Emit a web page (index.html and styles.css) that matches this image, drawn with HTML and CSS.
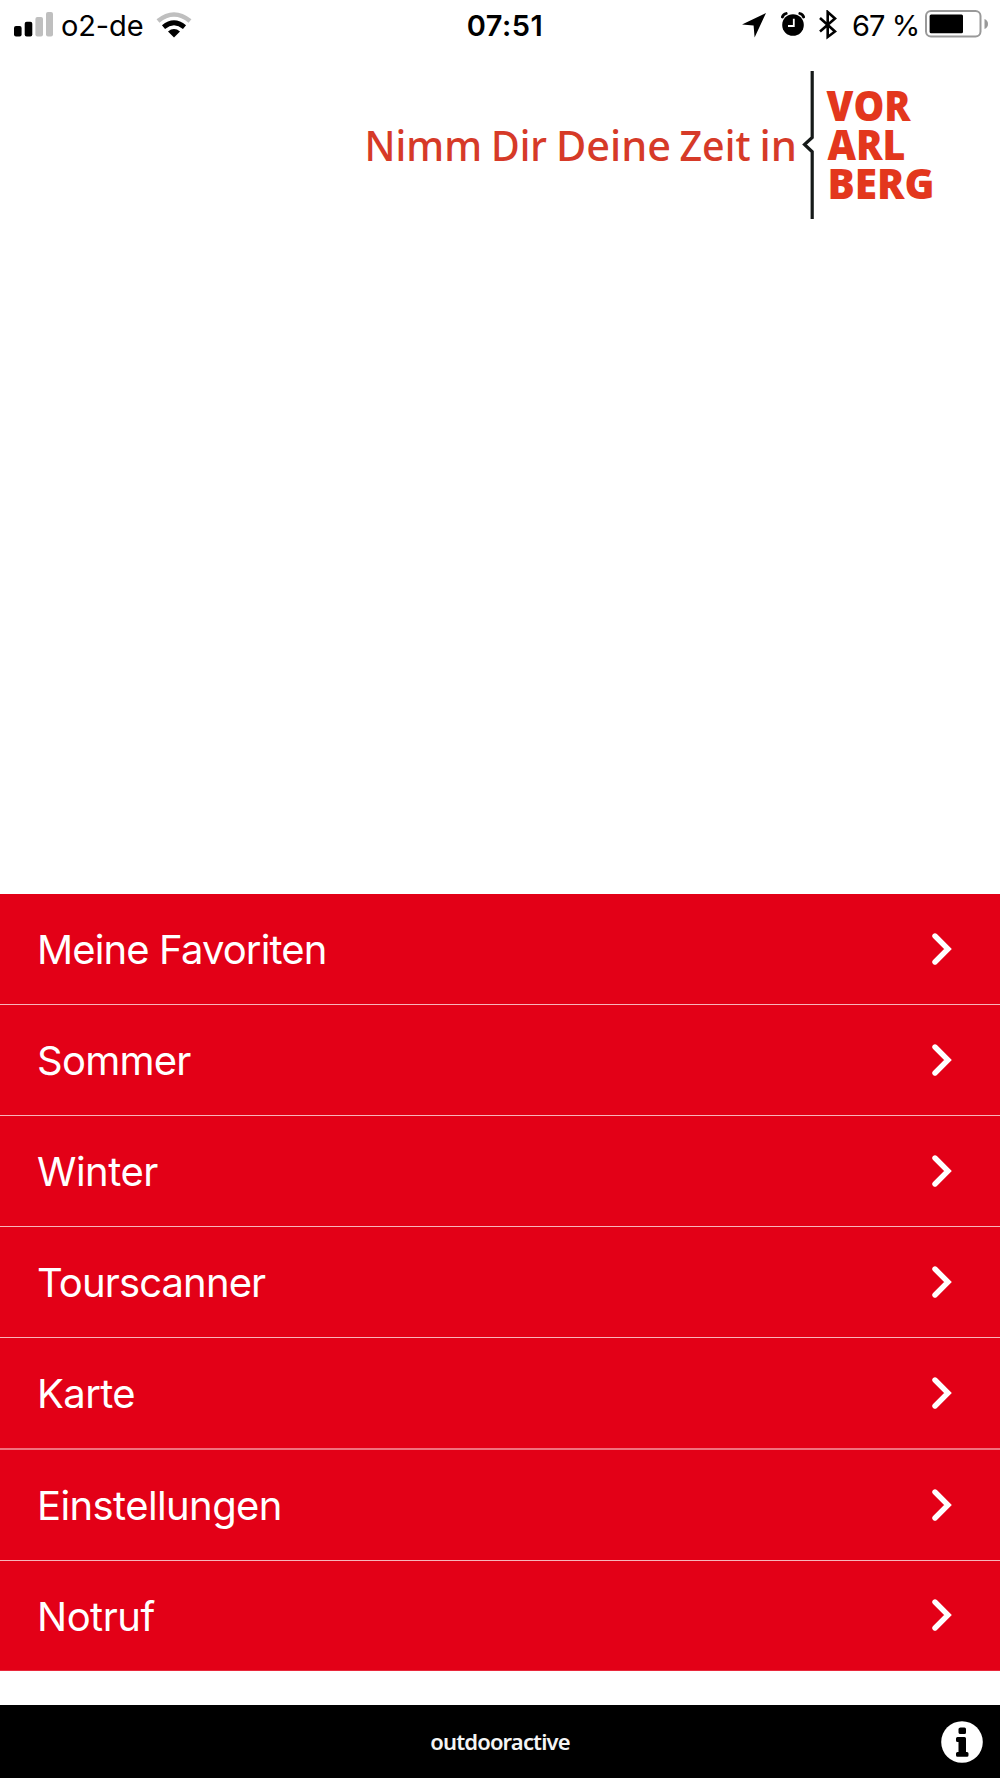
FILE: index.html
```html
<!DOCTYPE html>
<html lang="de">
<head>
<meta charset="utf-8">
<title>Vorarlberg</title>
<link rel="stylesheet" href="styles.css">
</head>
<body>
<div class="screen">
  <header class="status">
    <div class="status-left">
      <svg class="signal" width="39" height="25" viewBox="0 0 39 25">
        <rect x="0" y="14" width="7.6" height="10.6" rx="2"/>
        <rect x="10.7" y="9.8" width="7.6" height="14.8" rx="2"/>
        <g class="dim"><rect x="21.4" y="5" width="7.6" height="19.6" rx="2"/><rect x="32" y="0" width="7" height="24.6" rx="2"/></g>
      </svg>
      <span class="carrier">o2-de</span>
      <svg class="wifi" width="36" height="26" viewBox="0 0 36 26">
        <path class="wifi-far" d="M2 9Q18-4 34 9"/>
        <path class="wifi-near" d="M7.5 15.2Q18 6.5 28.5 15.2"/>
        <path d="M12 19.4Q18 14.8 24 19.4L18 25.4Z"/>
      </svg>
    </div>
    <time class="clock">07:51</time>
    <div class="status-right">
      <svg class="location" width="24" height="25" viewBox="0 0 24 25"><path d="M24 0L12.6 24.5L11.6 12.6L0 11.6Z"/></svg>
      <svg class="alarm" width="24" height="24" viewBox="0 0 24 24">
        <circle cx="12" cy="13" r="10.8"/>
        <path class="bells" d="M1.4 5Q2.2 2.2 5.2 1.5M22.6 5Q21.8 2.2 18.8 1.5"/>
        <path class="hands" d="M12.8 6.8V14H7"/>
      </svg>
      <svg class="bluetooth" width="18" height="30" viewBox="0 0 18 30"><path d="M1 8L16 21.5L8.7 27V2L16 8.5L1 21.5"/></svg>
      <span class="percent">67 %</span>
      <svg class="battery" width="64" height="28" viewBox="0 0 64 28">
        <rect class="shell" x="1" y="1" width="54.5" height="25.5" rx="5"/>
        <rect x="4.6" y="4.4" width="33.4" height="18.8" rx="1.5"/>
        <path class="cap" d="M59.5 9Q63 10.4 63 14T59.5 19Z"/>
      </svg>
    </div>
  </header>

  <div class="brand">
    <svg class="logo" width="580" height="150" viewBox="360 70 580 150">
      <g class="claim">
        <text x="364.5" y="160.5" textLength="117.5" lengthAdjust="spacingAndGlyphs">Nimm</text>
        <text x="491" y="160.5" textLength="56" lengthAdjust="spacingAndGlyphs">Dir</text>
        <text x="556" y="160.5" textLength="115" lengthAdjust="spacingAndGlyphs">Deine</text>
        <text x="679.5" y="160.5" textLength="71" lengthAdjust="spacingAndGlyphs">Zeit</text>
        <text x="759.5" y="160.5" textLength="37.5" lengthAdjust="spacingAndGlyphs">in</text>
      </g>
      <path class="divider" d="M812.2 71V137.5L804.5 144.5L812.2 151.8V219"/>
      <g class="name">
        <text x="826.5" y="120.5" textLength="84" lengthAdjust="spacingAndGlyphs">VOR</text>
        <text x="827.5" y="160" textLength="78" lengthAdjust="spacingAndGlyphs">ARL</text>
        <text x="827.5" y="199.3" textLength="107" lengthAdjust="spacingAndGlyphs">BERG</text>
      </g>
    </svg>
  </div>

  <nav class="menu">
    <a class="item favorites"><span>Meine Favoriten</span><svg class="chevron" width="20" height="32" viewBox="0 0 20 32"><path d="M3 3L16 16L3 29"/></svg></a>
    <a class="item summer"><span>Sommer</span><svg class="chevron" width="20" height="32" viewBox="0 0 20 32"><path d="M3 3L16 16L3 29"/></svg></a>
    <a class="item winter"><span>Winter</span><svg class="chevron" width="20" height="32" viewBox="0 0 20 32"><path d="M3 3L16 16L3 29"/></svg></a>
    <a class="item tours"><span>Tourscanner</span><svg class="chevron" width="20" height="32" viewBox="0 0 20 32"><path d="M3 3L16 16L3 29"/></svg></a>
    <a class="item map"><span>Karte</span><svg class="chevron" width="20" height="32" viewBox="0 0 20 32"><path d="M3 3L16 16L3 29"/></svg></a>
    <a class="item settings"><span>Einstellungen</span><svg class="chevron" width="20" height="32" viewBox="0 0 20 32"><path d="M3 3L16 16L3 29"/></svg></a>
    <a class="item emergency"><span>Notruf</span><svg class="chevron" width="20" height="32" viewBox="0 0 20 32"><path d="M3 3L16 16L3 29"/></svg></a>
  </nav>

  <footer class="footer">
    <span class="provider">outdooractive</span>
    <svg class="info" width="42" height="42" viewBox="0 0 42 42">
      <circle cx="21" cy="21" r="20.8"/>
      <path class="glyph" d="M19.5 6.5H23.5Q25 6.5 25 8V11.5Q25 13 23.5 13H19.5Q17.5 13 17.5 11.5V8Q17.5 6.5 19.5 6.5ZM16.5 16H23.5Q25 16 25 17.5V31H26Q27.5 31 27.5 32.5V34.3Q27.5 35.8 26 35.8H16.5Q15 35.8 15 34.3V32.5Q15 31 16.5 31H17.5V21H16.5Q15 21 15 19.5V17.5Q15 16 16.5 16Z"/>
    </svg>
  </footer>
</div>
</body>
</html>
```
FILE: styles.css
```css
* { box-sizing: border-box; }
body { margin: 0; background: #fff; font-family: Inter, "Liberation Sans", sans-serif; }
svg { display: block; flex: none; }
.screen { display: flex; flex-direction: column; width: 1000px; height: 1778px; background: #fff; }

.status { display: grid; grid-template-columns: 1fr auto 1fr; height: 50px; color: #000; font-size: 29px; line-height: 52px; }
.status-left { display: flex; align-items: flex-start; padding-left: 14px; }
.signal { margin-top: 12px; }
.dim { fill: #bfbfbf; }
.carrier { margin-left: 8px; letter-spacing: -0.1px; width: 83px; white-space: nowrap; }
.wifi { margin: 12px 0 0 12px; }
.wifi-far { fill: none; stroke: #bfbfbf; stroke-width: 4.6; }
.wifi-near { fill: none; stroke: #000; stroke-width: 4.8; }
.clock { font-weight: 600; letter-spacing: 0.5px; padding-left: 10px; }
.status-right { display: flex; align-items: flex-start; justify-content: flex-end; padding-right: 11px; }
.location { margin-top: 13px; }
.alarm { margin: 12px 0 0 15px; }
.bells { fill: none; stroke: #000; stroke-width: 2.8; stroke-linecap: round; }
.hands { fill: none; stroke: #fff; stroke-width: 1.8; }
.bluetooth { margin: 10px 0 0 14px; fill: none; stroke: #000; stroke-width: 2.6; }
.percent { margin-left: 15px; width: 66px; white-space: nowrap; letter-spacing: -0.9px; }
.battery { margin: 10px 0 0 7px; }
.shell { fill: none; stroke: #999; stroke-width: 2; }
.cap { fill: #999; }

.brand { display: flex; flex: 1; align-items: flex-start; justify-content: flex-end; padding: 20px 60px 0 0; }
.claim { fill: #d63a28; font: 500 42px "Noto Sans", sans-serif; }
.name { fill: #e3371d; font: 800 42px "Open Sans", sans-serif; }
.divider { fill: none; stroke: #161a19; stroke-width: 3.2; }

.menu { display: flex; flex-direction: column; height: 777px; background: #e30017; color: #fff; }
.item { display: flex; align-items: center; justify-content: space-between; height: 111px; padding: 0 48px 0 37px; border-bottom: 1px solid #f8b4ba; font-size: 40px; line-height: 48px; }
.item span { padding-top: 2px; }
.favorites, .tours { letter-spacing: -0.87px; }
.summer { letter-spacing: -0.75px; }
.winter, .emergency { letter-spacing: -0.5px; }
.map, .settings { letter-spacing: -0.6px; }
.item.map { height: 112px; border-bottom: 2px solid #f0707d; }
.item.emergency { height: 110px; border-bottom-color: #e9283b; }
.chevron { margin-bottom: 1px; fill: none; stroke: #fff; stroke-width: 5.4; stroke-linecap: round; }

.footer { display: grid; grid-template-columns: 1fr auto 1fr; align-items: center; height: 73px; margin-top: 34px; padding: 1px 17px 0; background: #000; color: #f4f4f4; }
.provider { grid-column: 2; padding-bottom: 2px; font: 600 22px/30px "Noto Sans", sans-serif; letter-spacing: -0.85px; }
.info { grid-column: 3; justify-self: end; fill: #fff; }
.glyph { fill: #000; }
```
